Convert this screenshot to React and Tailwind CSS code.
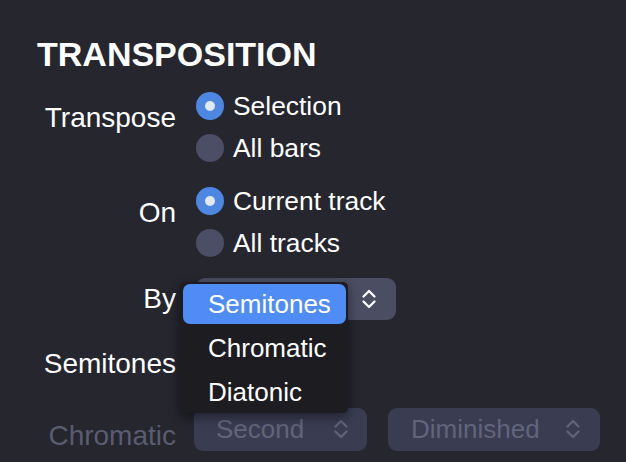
import React from "react";

function Chevrons({ color = "#ffffff" }) {
  return (
    <svg width="16" height="24" viewBox="0 0 16 24" fill="none">
      <path d="M2.5 9.5 L8 4 L13.5 9.5" stroke={color} strokeWidth="2.2" strokeLinecap="round" strokeLinejoin="round" />
      <path d="M2.5 14.5 L8 20 L13.5 14.5" stroke={color} strokeWidth="2.2" strokeLinecap="round" strokeLinejoin="round" />
    </svg>
  );
}

function Radio({ checked, label }) {
  return (
    <div className="flex items-center h-[42px] gap-[9px]">
      {checked ? (
        <span className="w-7 h-7 rounded-full bg-[#4e87e2] flex items-center justify-center">
          <span className="w-[10px] h-[10px] rounded-full bg-[#e3e9f2]" />
        </span>
      ) : (
        <span className="w-7 h-7 rounded-full bg-[#4c4e66]" />
      )}
      <span className="text-[26.4px] text-white leading-[32px]">{label}</span>
    </div>
  );
}

function Label({ children, className = "" }) {
  return (
    <div className={"w-[139px] shrink-0 text-right text-[28px] leading-[32px] " + className}>
      {children}
    </div>
  );
}

export default function App() {
  const menu = ["Semitones", "Chromatic", "Diatonic"];
  return (
    <div
      className="w-[626px] h-[462px] overflow-hidden bg-[#25262e] text-white pl-[37px] pt-[35px]"
      style={{ fontFamily: '"Liberation Sans", Arial, sans-serif' }}
    >
      <h1 className="text-[34px] leading-[38px] font-bold">TRANSPOSITION</h1>

      <div className="flex gap-5 mt-[12px]">
        <Label className="pt-[17px]">Transpose</Label>
        <div className="flex flex-col">
          <Radio checked label="Selection" />
          <Radio label="All bars" />
        </div>
      </div>

      <div className="flex gap-5 mt-[11px]">
        <Label className="pt-[17px]">On</Label>
        <div className="flex flex-col">
          <Radio checked label="Current track" />
          <Radio label="All tracks" />
        </div>
      </div>

      <div className="flex items-center gap-5 mt-[14px]">
        <Label>By</Label>
        <div className="relative">
          <div className="w-[200px] h-[42px] rounded-[9px] bg-[#4b4d62] flex items-center justify-end pr-[19px]">
            <Chevrons />
          </div>
          <div className="absolute left-[-16px] top-[4px] w-[168px] h-[131px] bg-[#1c1c21] rounded-[5px] shadow-[0_4px_12px_rgba(0,0,0,0.45)] z-10 flex flex-col">
            {menu.map((m, i) => (
              <div key={m} className="h-[44px] pl-[3px] pr-[2px] py-[2px] shrink-0">
                <div
                  className={
                    "h-full rounded-[7px] flex items-center pl-[25px] text-[26px] " +
                    (i === 0 ? "bg-[#4f8cf6]" : "")
                  }
                >
                  {m}
                </div>
              </div>
            ))}
          </div>
        </div>
      </div>

      <div className="flex items-center gap-5 mt-[23px] h-[42px]">
        <Label>Semitones</Label>
      </div>

      <div className="flex items-center mt-[21px]">
        <Label className="pt-[14px] text-[#5a5c71]">Chromatic</Label>
        <div className="ml-[18px] w-[173px] h-[43px] rounded-[9px] bg-[#3a3c52] flex items-center justify-between pl-[22px] pr-[18px]">
          <span className="text-[26px] text-[#62647c]">Second</span>
          <Chevrons color="#62647c" />
        </div>
        <div className="ml-[21px] w-[212px] h-[43px] rounded-[9px] bg-[#3a3c52] flex items-center justify-between pl-[23px] pr-[19px]">
          <span className="text-[26px] text-[#62647c]">Diminished</span>
          <Chevrons color="#62647c" />
        </div>
      </div>
    </div>
  );
}
